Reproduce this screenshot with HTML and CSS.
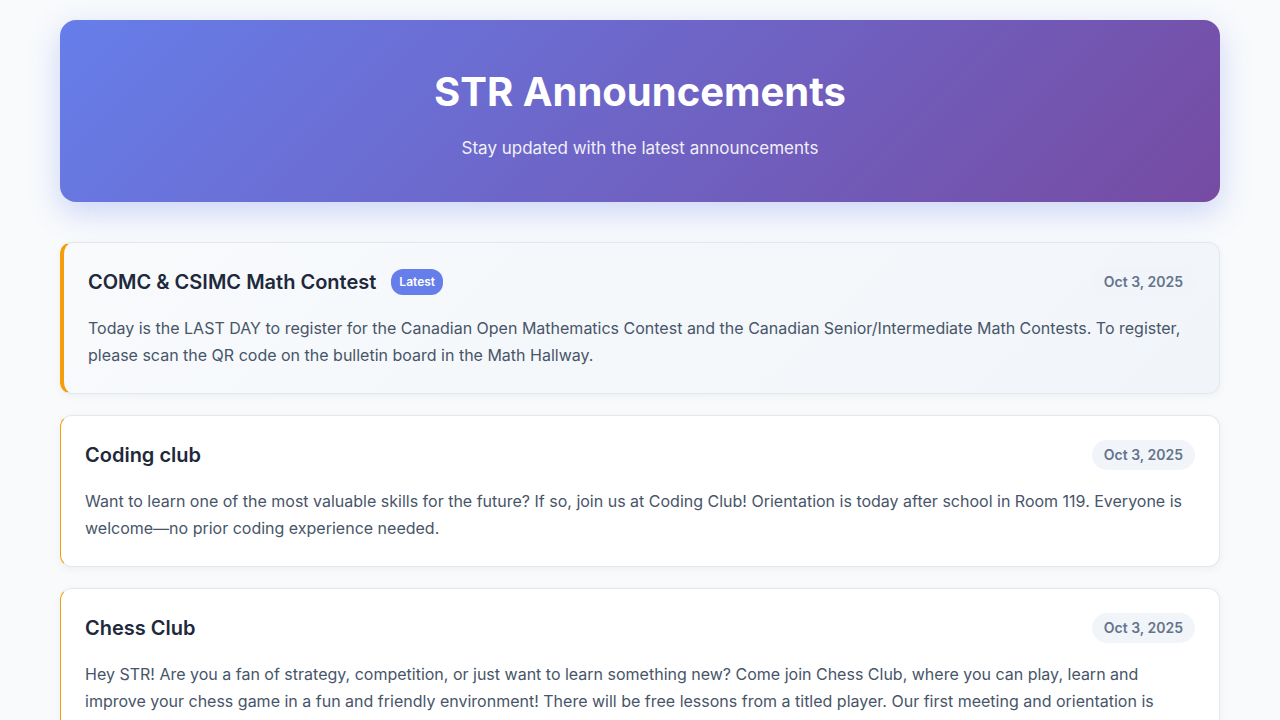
FILE: index.html
```html
<!DOCTYPE html>
<html lang="en">
<head>
<meta charset="utf-8">
<title>STR Announcements</title>
<link rel="stylesheet" href="styles.css">
</head>
<body>
<div class="container">
  <header class="hero">
    <h1 class="hero-title">STR Announcements</h1>
    <p class="hero-sub">Stay updated with the latest announcements</p>
  </header>
  <main class="list">
    <article class="card card-latest">
      <div class="card-head">
        <div class="title-wrap">
          <h2 class="card-title">COMC &amp; CSIMC Math Contest</h2>
          <span class="badge">Latest</span>
        </div>
        <span class="date">Oct 3, 2025</span>
      </div>
      <p class="card-text">Today is the LAST DAY to register for the Canadian Open Mathematics Contest and the Canadian Senior/Intermediate Math Contests. To register, please scan the QR code on the bulletin board in the Math Hallway.</p>
    </article>
    <article class="card">
      <div class="card-head">
        <div class="title-wrap">
          <h2 class="card-title">Coding club</h2>
        </div>
        <span class="date">Oct 3, 2025</span>
      </div>
      <p class="card-text">Want to learn one of the most valuable skills for the future? If so, join us at Coding Club! Orientation is today after school in Room 119. Everyone is welcome—no prior coding experience needed.</p>
    </article>
    <article class="card">
      <div class="card-head">
        <div class="title-wrap">
          <h2 class="card-title">Chess Club</h2>
        </div>
        <span class="date">Oct 3, 2025</span>
      </div>
      <p class="card-text">Hey STR! Are you a fan of strategy, competition, or just want to learn something new? Come join Chess Club, where you can play, learn and improve your chess game in a fun and friendly environment! There will be free lessons from a titled player. Our first meeting and orientation is today after school in the library. Everyone is welcome, no matter your skill level!</p>
    </article>
  </main>
</div>
</body>
</html>
```

FILE: styles.css
```css
* { box-sizing: border-box; }
html, body { margin: 0; padding: 0; }
body {
  background: #f8fafc;
  font-family: Inter, "Noto Sans", "Liberation Sans", sans-serif;
  color: #1e293b;
  padding: 20px;
}
.container {
  max-width: 1160px;
  margin: 0 auto;
}
.hero {
  background: linear-gradient(135deg, #667eea 0%, #764ba2 100%);
  border-radius: 16px;
  padding: 48px 40px 42px;
  text-align: center;
  color: #ffffff;
  box-shadow: 0 10px 30px rgba(102, 126, 234, 0.3);
  margin-bottom: 40px;
}
.hero-title {
  margin: 0;
  font-size: 40px;
  line-height: 48px;
  font-weight: 700;
}
.hero-sub {
  margin: 20px 0 0;
  font-size: 17px;
  line-height: 24px;
  font-weight: 400;
  opacity: 0.9;
}
.list {
  display: flex;
  flex-direction: column;
  gap: 21px;
}
.card {
  background: #ffffff;
  border: 1px solid #e2e8f0;
  border-left: 1px solid #f59e0b;
  border-radius: 12px;
  padding: 24px;
  box-shadow: 0 2px 8px rgba(0, 0, 0, 0.05);
}
.card-latest {
  border-left: 4px solid #f59e0b;
  background: linear-gradient(135deg, #f8fafc 0%, #f1f5f9 100%);
}
.card-head {
  display: flex;
  justify-content: space-between;
  align-items: center;
  margin-bottom: 18px;
}
.title-wrap {
  display: flex;
  align-items: center;
  gap: 15px;
}
.card-title {
  margin: 0;
  font-size: 20px;
  line-height: 28px;
  font-weight: 600;
  color: #1e293b;
}
.badge {
  display: block;
  background: #667eea;
  color: #ffffff;
  font-size: 12px;
  font-weight: 600;
  line-height: 14px;
  padding: 6px 8px;
  border-radius: 12px;
}
.date {
  display: block;
  background: #f1f5f9;
  color: #64748b;
  font-size: 14px;
  font-weight: 600;
  line-height: 18px;
  padding: 6px 12px;
  border-radius: 20px;
}
.card-text {
  margin: 0;
  font-size: 16px;
  line-height: 27px;
  color: #475569;
}
```
